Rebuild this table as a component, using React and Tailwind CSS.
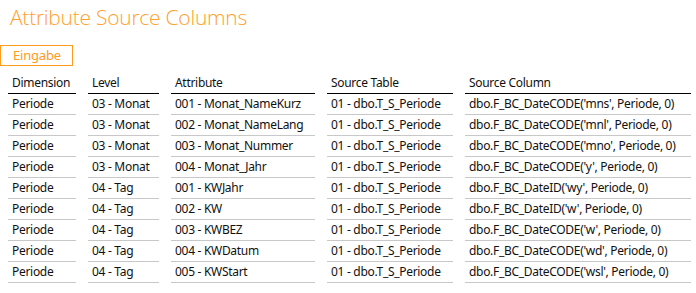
const rows = [
  ["Periode", "03 - Monat", "001 - Monat_NameKurz", "01 - dbo.T_S_Periode", "dbo.F_BC_DateCODE('mns', Periode, 0)"],
  ["Periode", "03 - Monat", "002 - Monat_NameLang", "01 - dbo.T_S_Periode", "dbo.F_BC_DateCODE('mnl', Periode, 0)"],
  ["Periode", "03 - Monat", "003 - Monat_Nummer", "01 - dbo.T_S_Periode", "dbo.F_BC_DateCODE('mno', Periode, 0)"],
  ["Periode", "03 - Monat", "004 - Monat_Jahr", "01 - dbo.T_S_Periode", "dbo.F_BC_DateCODE('y', Periode, 0)"],
  ["Periode", "04 - Tag", "001 - KWJahr", "01 - dbo.T_S_Periode", "dbo.F_BC_DateID('wy', Periode, 0)"],
  ["Periode", "04 - Tag", "002 - KW", "01 - dbo.T_S_Periode", "dbo.F_BC_DateID('w', Periode, 0)"],
  ["Periode", "04 - Tag", "003 - KWBEZ", "01 - dbo.T_S_Periode", "dbo.F_BC_DateCODE('w', Periode, 0)"],
  ["Periode", "04 - Tag", "004 - KWDatum", "01 - dbo.T_S_Periode", "dbo.F_BC_DateCODE('wd', Periode, 0)"],
  ["Periode", "04 - Tag", "005 - KWStart", "01 - dbo.T_S_Periode", "dbo.F_BC_DateCODE('wsl', Periode, 0)"],
];

const headers = ["Dimension", "Level", "Attribute", "Source Table", "Source Column"];

export default function App() {
  return (
    <div
      className="w-[696px] h-[293px] bg-white overflow-hidden"
      style={{ fontFamily: '"Segoe UI", "Noto Sans", sans-serif' }}
    >
      <h1
        className="pl-[10px] pt-[3px] h-[45px] text-[21px] leading-[28px] font-light tracking-[-0.25px] text-[#ffa030]"
        style={{ fontFamily: '"Segoe UI Light", "Open Sans", sans-serif' }}
      >
        Attribute Source Columns
      </h1>

      <div className="w-[73px] h-[21px] border border-[#ff9a1a] text-[#ff9a1a] text-[13px] leading-[19px] pl-3 tracking-[-0.2px]">
        Eingabe
      </div>

      <div className="mt-[7px] ml-2 grid grid-cols-[68px_71px_144px_126px_226px] gap-x-3 text-[12px] tracking-[-0.3px] text-[#111]">
        {headers.map((h) => (
          <div key={h} className="h-[21px] leading-[20px] px-1 border-b border-black">
            {h}
          </div>
        ))}
        {rows.map((r, i) =>
          r.map((c, j) => (
            <div
              key={i + "-" + j}
              className="h-[21px] leading-[20px] px-1 border-b border-[#c8c8c8] whitespace-nowrap"
            >
              {c}
            </div>
          ))
        )}
      </div>
    </div>
  );
}
